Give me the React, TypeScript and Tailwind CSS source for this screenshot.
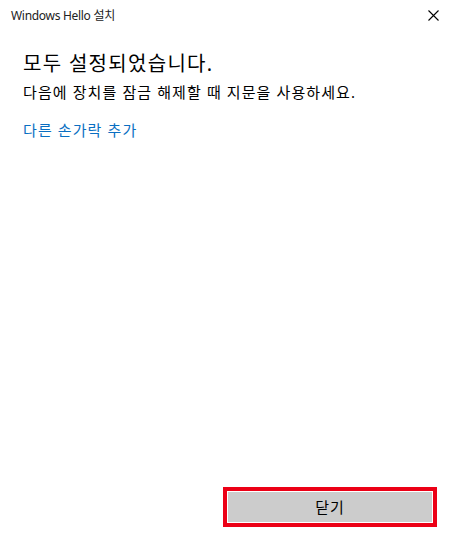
import React from "react";

export default function App() {
  return (
    <div className="w-[455px] h-[544px] bg-white flex flex-col text-black font-['Noto_Sans','Noto_Sans_CJK_KR',sans-serif]">
      <div className="h-[31px] flex items-center justify-between pl-[11px] pr-[16px]">
        <span className="text-[12px] tracking-[-0.3px] text-[#222]">Windows Hello 설치</span>
        <svg width="11" height="11" viewBox="0 0 11 11" className="text-black">
          <path d="M0.5 0.5 L10.5 10.5 M10.5 0.5 L0.5 10.5" stroke="currentColor" strokeWidth="1.1" fill="none" />
        </svg>
      </div>
      <div className="pl-[23px] flex flex-col">
        <h1 className="mt-[19px] text-[20px] leading-[28px] tracking-[1.3px] font-normal">모두 설정되었습니다.</h1>
        <p className="mt-[3px] text-[15px] leading-[22px] tracking-[1.1px]">다음에 장치를 잠금 해제할 때 지문을 사용하세요.</p>
        <a className="mt-[16px] text-[15px] leading-[22px] tracking-[1.1px] text-[#0a6fc2] cursor-pointer">다른 손가락 추가</a>
      </div>
      <div className="flex-1" />
      <div className="flex justify-end pr-[18px] pb-[17px]">
        <button className="w-[214px] h-[40px] border-[4px] border-[#ec0016] p-[1px] bg-white">
          <span className="w-full h-full bg-[#cccccc] flex items-center justify-center text-[15px] tracking-[1px] text-black">
            닫기
          </span>
        </button>
      </div>
    </div>
  );
}
